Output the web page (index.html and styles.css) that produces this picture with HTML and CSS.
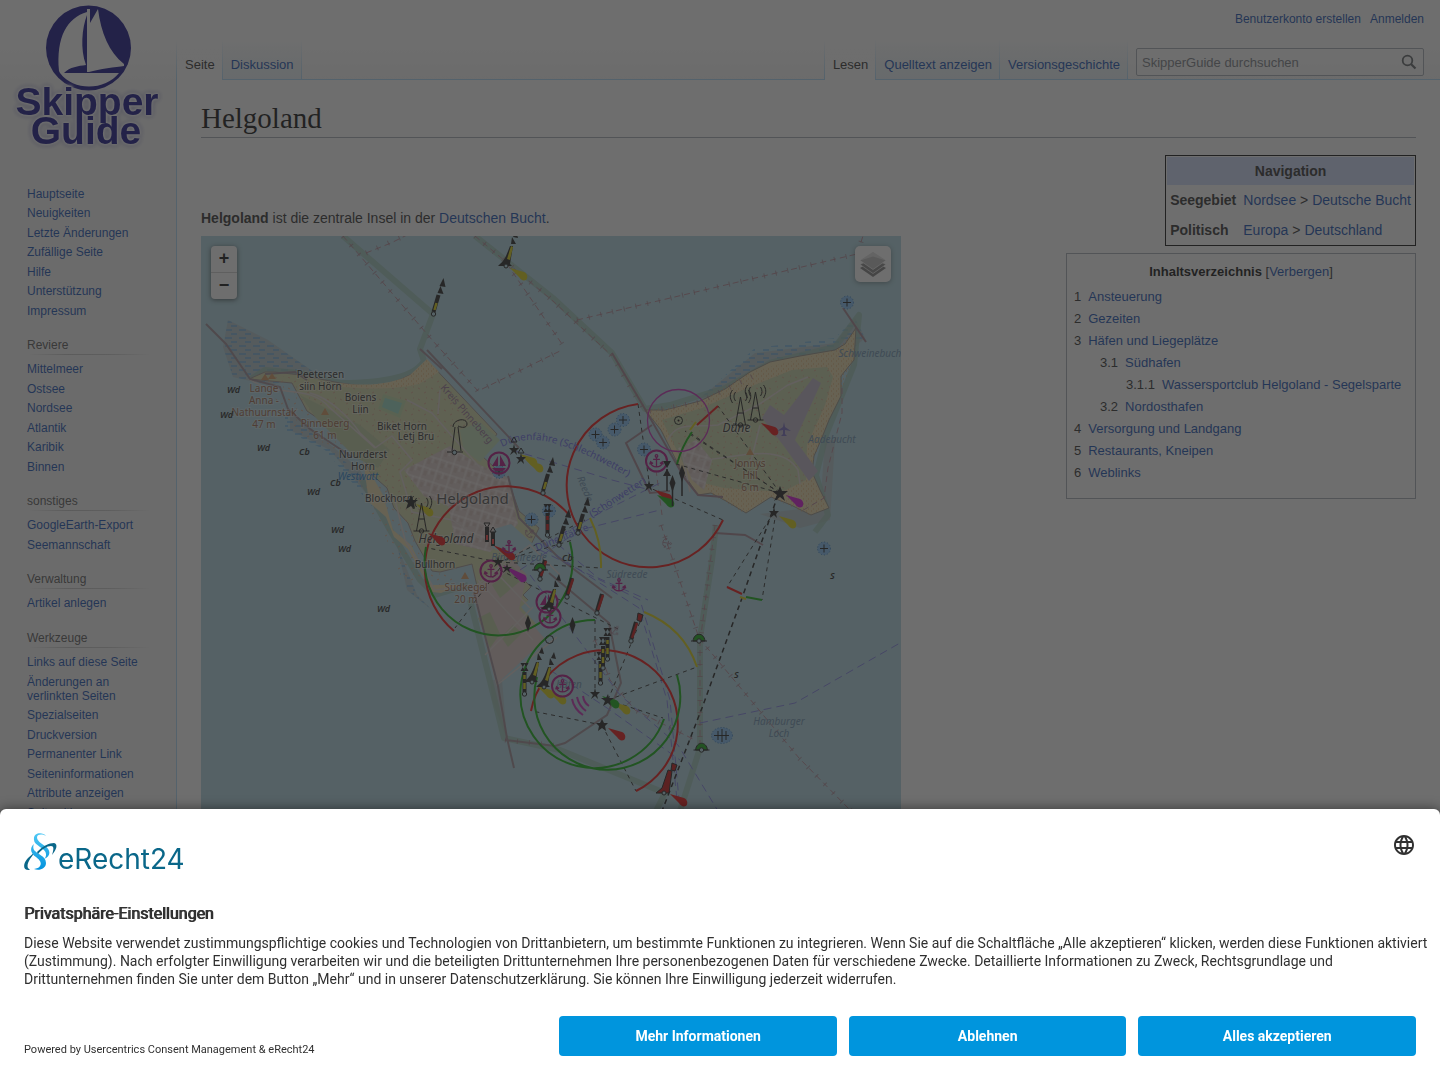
FILE: index.html
```html
<!DOCTYPE html>
<html lang="de">
<head>
<meta charset="utf-8">
<title>Helgoland – SkipperGuide</title>
<meta name="viewport" content="width=device-width, initial-scale=1">
<link rel="stylesheet" href="styles.css">
</head>
<body>
<div class="page">
  <aside class="sidebar">
    <a class="logo" href="#" aria-label="Hauptseite">
      <svg width="160" height="160" viewBox="0 0 160 160" aria-hidden="true">
        <circle cx="80.500" cy="48" r="42.500" fill="#050080"/>
        <g fill="#fff">
          <path d="M79 12C59 18 48 37 51 71l1 2 4 0C62 67 70 66 78 65 72 49 74 28 79 15z"/>
          <path d="M79 9h3v14l8-14c3 24 11 43 26 55l0 2c-8 1-25 3-35 6H79z"/>
          <path d="M52 73h59C98 90 66 92 52 73z"/>
        </g>
        <g class="logo-text" text-anchor="middle">
          <text x="79" y="115">Skipper</text>
          <text x="78" y="144">Guide</text>
        </g>
      </svg>
    </a>
    <nav class="portal" aria-label="Navigation">
      <ul>
        <li><a href="#">Hauptseite</a></li><li><a href="#">Neuigkeiten</a></li><li><a href="#">Letzte Änderungen</a></li><li><a href="#">Zufällige Seite</a></li><li><a href="#">Hilfe</a></li><li><a href="#">Unterstützung</a></li><li><a href="#">Impressum</a></li>
      </ul>
    </nav>
    <nav class="portal titled"><h3>Reviere</h3>
      <ul>
        <li><a href="#">Mittelmeer</a></li><li><a href="#">Ostsee</a></li><li><a href="#">Nordsee</a></li><li><a href="#">Atlantik</a></li><li><a href="#">Karibik</a></li><li><a href="#">Binnen</a></li>
      </ul>
    </nav>
    <nav class="portal titled"><h3>sonstiges</h3>
      <ul><li><a href="#">GoogleEarth-Export</a></li><li><a href="#">Seemannschaft</a></li></ul>
    </nav>
    <nav class="portal titled"><h3>Verwaltung</h3>
      <ul><li><a href="#">Artikel anlegen</a></li></ul>
    </nav>
    <nav class="portal titled"><h3>Werkzeuge</h3>
      <ul>
        <li><a href="#">Links auf diese Seite</a></li><li><a href="#">Änderungen an verlinkten Seiten</a></li><li><a href="#">Spezialseiten</a></li><li><a href="#">Druckversion</a></li><li><a href="#">Permanenter Link</a></li><li><a href="#">Seiten­informationen</a></li><li><a href="#">Attribute anzeigen</a></li><li><a href="#">Seite zitieren</a></li>
      </ul>
    </nav>
  </aside>

  <div class="column">
    <header class="head">
      <div class="personal"><a href="#">Benutzerkonto erstellen</a><a href="#">Anmelden</a></div>
      <div class="bar">
        <nav class="tabs tabs-left"><a class="tab on" href="#">Seite</a><a class="tab" href="#">Diskussion</a></nav>
        <nav class="tabs"><a class="tab on" href="#">Lesen</a><a class="tab" href="#">Quelltext anzeigen</a><a class="tab" href="#">Versionsgeschichte</a></nav>
        <form class="search">
          <input type="search" placeholder="SkipperGuide durchsuchen" aria-label="SkipperGuide durchsuchen">
          <button type="button" aria-label="Suchen"><svg width="16" height="16" viewBox="0 0 16 16"><circle cx="6.500" cy="6.500" r="4.800" fill="none" stroke="#54595d" stroke-width="1.800"/><path d="M10 10l4.500 4.500" stroke="#54595d" stroke-width="2.200"/></svg></button>
        </form>
      </div>
    </header>

    <main class="content">
      <h1>Helgoland</h1>
      <div class="body">
        <div class="article">
          <p><b>Helgoland</b> ist die zentrale Insel in der <a href="#">Deutschen Bucht</a>.</p>
          <div class="map">
            <svg class="chart" width="700" height="600" viewBox="201 236 700 600" role="img" aria-label="Seekarte von Helgoland">
              <defs>
                <pattern id="mud" width="14" height="8" patternUnits="userSpaceOnUse"><path d="M1 2h7M7 6h6" stroke="#4a9fe8"/></pattern>
                <pattern id="sand" width="5" height="5" patternUnits="userSpaceOnUse"><path d="M1 1h1M3 4h1" stroke="#d8a060"/></pattern>
                <pattern id="scrub" width="13" height="11" patternUnits="userSpaceOnUse"><path d="M2 3l2 1M8 8l2-1M10 2h1" stroke="#d2a588"/></pattern>
                <pattern id="town" width="14" height="12" patternUnits="userSpaceOnUse" patternTransform="rotate(18)"><path d="M0 1h14M1 0v12M8 1v6" stroke="#efe8e6"/><path d="M3 4h3v5H3zM10 3h3v3h-3z" fill="#cdb9b3"/></pattern>
                <g id="anchor" fill="none" stroke="currentColor" stroke-width="1.500"><circle cy="-6" r="1.500"/><path d="M0-5V7M-4-2h8M-7 2C-6 6-3 7 0 7s6-1 7-5M-8 4l1-3 3 2M8 4L7 1 4 3"/></g>
                <g id="port"><circle r="10.500" fill="none" stroke="#a80078" stroke-width="2"/><use href="#anchor" color="#a80078" transform="scale(.85)"/></g>
                <g id="marina"><circle r="10.500" fill="none" stroke="#a80078" stroke-width="2"/><path d="M-1-7v10h-6zM1-8l6 11H1zM-7 5H7L4 8h-8z" fill="#a80078"/></g>
                <path id="flare" d="M0 0l14 4c4 2 4 6 2 8-3 1-5 0-7-3z" fill="currentColor"/>
                <g id="wreck"><circle r="6.500" fill="#79b8f0" stroke="#2b75c2" stroke-dasharray="1 2"/><path d="M-4 0h8M0-4v8" stroke="#111"/></g>
                <g id="spar"><path d="M0-2l5-17" stroke="#111" stroke-width="4"/><path d="M1-4l2-7" stroke="currentColor" stroke-width="2.500"/><path d="M4-21l3-7 3 8zM6-28l4-8 2 9z" fill="#111"/><circle r="2.200" fill="#aad3df" stroke="#111"/></g>
                <g id="post"><path d="M0-2v-20" stroke="#111" stroke-width="4"/><path d="M0-5v-6M0-15v-4" stroke="currentColor" stroke-width="2.500"/><path d="M-4-31h8l-4 7zM-4-23h8l-4-7z" fill="#111"/><circle r="2.200" fill="#aad3df" stroke="#111"/></g>
                <g id="redspar"><path d="M0-2l5-17" stroke="#111" stroke-width="4"/><path d="M1-3l5-15" stroke="#c00000" stroke-width="2.500"/><circle r="2.200" fill="#aad3df" stroke="#111"/></g>
                <g id="bigbuoy"><path d="M-8 0h14L4-2 7-20h-3C1-12-1-6-6-2z" fill="#111"/><path d="M1-7l4-13 2 1-3 13z" fill="currentColor"/><path d="M5-22l1-7 4 7zM7-29l3-6 2 7z" fill="#111"/><circle r="2" fill="#aad3df" stroke="#111"/></g>
                <g id="green"><path d="M-6 0c1-9 11-9 12 0z" fill="#00a000" stroke="#111"/><path d="M-8 0H8" stroke="#111"/><circle r="2.200" fill="#aad3df" stroke="#111"/></g>
                <g id="mast" fill="none" stroke="#111"><path d="M0-28l-5 28M0-28L5 0M-8 0H8M-3-12h6"/><circle r="2.200"/><path d="M-5-24c-2-3-2-6 0-9M-8-22c-3-5-3-9 0-13M5-24c2-3 2-6 0-9M8-22c3-5 3-9 0-13"/></g>
                <path id="diamond" d="M0-9l3 8-3 9-3-9z" fill="#111"/>
              </defs>

              <rect x="201" y="236" width="700" height="600" fill="#aad3df"/>

              <!-- tidal flats -->
              <path fill="#aabfc5" d="M228 320l40 20 50 35-50 10-35-8-10-30zM290 410l70 60 20 40-50-60-40-20zM397 545l20 50 15 15-25-20zM490 680l12 0 5 60-15-40zM700 398l55-45 80-10 20-25 10 20-25 22-90 20-45 20zM825 440l10 0-5 80-30 8-40-14 40-5 20 0z"/>
              <path fill="url(#mud)" d="M228 320l40 20 50 35-50 10-35-8-10-30zM285 410l70 60 20 40-50-60-40-20zM397 545l20 50 15 15-25-20zM700 398l55-50 80-10 20-20 10 20-25 22-90 20-45 20z"/>

              <!-- safety contours -->
              <g class="contour">
                <path d="M343 236l90 78-13 35 4 12c-10 18-50 22-84 22l-40-10-35-3-14 9"/>
                <path d="M475 236l78 62 59 55 33 56 25-4 55-17 45-25 65-16 24-32-5 50-28 70-10 40 12 40-13 17"/>
                <path d="M716 525l-4 35-12 78v110l-20 63M470 600l34 138 56 12 105 43-9 18M362 480l28 50 30 50 15 15 33-10"/>
              </g>

              <!-- Hauptinsel -->
              <path fill="#cdd2a2" stroke="#9a8d88" d="M249 379l16-7 10 0 25 3 40 8 30 4 25-5 15-7 11-6 6-9 70 74-15 22 26 24 11 31 20 17-13 27-15 12 20 20-8 8 22 22-28 27-20 15-16-55-9-40-32 8-8-1-17-30-7-18-14-15-7-20-17-15-9-25-24-17-30-20-15-28z"/>
              <path fill="url(#scrub)" d="M265 375l35 3 80 12 48-25 50 55-40 40-20 100 40 20-20 12-40-15-8-30-27-50-10-35-55-30-20-28z"/>
              <path class="sand" d="M340 383c30 4 55 0 70-8l17-16 12 13-20 12c-25 6-50 5-79 3z"/>
              <path class="sand" d="M363 460l20 35 10 35 18 15 20 40 30 0-20 8-9-1-24-43-14-12-8-20-17-15z"/>
              <path fill="url(#sand)" d="M340 383c30 4 55 0 70-8l17-16 12 13-20 12c-25 6-50 5-79 3z"/>
              <path fill="#d6c6c2" d="M404 470l46-24 28 18 30 14 10 46-28 28-34-8-8-38-24-10z"/>
              <path fill="url(#town)" d="M404 470l46-24 28 18 30 14 10 46-28 28-34-8-8-38-24-10z"/>
              <path fill="#d6c2be" d="M473 590l40-30 14 15-8 34 26 30-47 44z"/>
              <path fill="#aad3df" d="M494 529l17-5 34 31-8 16-30-17-15-6zM521 607l16-15 18 14 0 18-10 10z"/>
              <g fill="#b9c99c"><path d="M492 585l20-19 12 12-24 20zM478 618l12-6 10 22-10 14zM501 637l12-12 9 8-14 14zM300 395l60 30 30 25-12 18-22-10-40-40z"/></g>
              <path fill="#b7d7b0" d="M460 430l20-8 20 18-20 22-16-12z"/>
              <path fill="#8fd8c0" stroke="#b9d8a0" stroke-width="3" d="M384 396l20 6-5 14-19-8z"/>
              <g fill="none" stroke="#d9cfcb" stroke-width="1.500"><path d="M249 379c30 20 60 5 80 28l46 41M310 393c20 5 40 25 50 40l15 14M375 448l17-12 20 24-12 12 12 40 40 8 30 20M407 400l25 13 12 14 40 45M440 390l-2 24M395 500l10 40 30 50 38-5M470 590l60-45 30 30M473 590l24 95 60-48M478 580l55 60M485 655l48-48M510 555l-38 40M490 566l40 42"/></g>
              <g fill="none" stroke="#97848e" stroke-width="2"><path d="M206 324l20 20 24 35 30 8 8 22 22 20 42 28M265 374l30-2 12 8M427 350l92 98M508 476l11 42 40 40 53 40M474 592l10 40 14 54 9 52 7 30M505 740l50 6 10-3 42-28 14-32-12-60-60-50M420 349l22 20"/></g>

              <!-- Düne -->
              <path class="sand" stroke="#8f8a80" d="M645 410l20 0 35-9 25-12 25-17 20-10 30-6 35-6 10-6 11-16-2 32-13 16 0 20-12 24-8 20-7 16-2 16 8 18 9 18-18 7-20-10-20-8-25 16-20-12-15-8-13 2-17-25-20-40z"/>
              <path fill="url(#sand)" d="M645 410l55-9 50-29 85-22 21-22-2 32-26 60-18 52 17 36-18 7-40-18-25 16-35-20z"/>
              <path fill="#c3d0a0" d="M662 420l40-12 50-22 40-16 35-3 6 10-8 28-18 40-1 35-24 12-58-4-20-5-20-18z"/>
              <path fill="url(#scrub)" d="M662 420l40-12 50-22 40-16 35-3 6 10-8 28-18 40-1 35-24 12-58-4-20-5-20-18z"/>
              <path fill="#d6c6c2" d="M680 450l16-10 16 20-8 30-12-10z"/><path fill="url(#town)" d="M678 448l18-8 16 20-8 30-12-10z"/>
              <path fill="#b9b0c2" d="M813 378l8 5-26 57 23 31-9 10-26-36-21-27 8-13 14 10z"/>
              <path fill="none" stroke="#d9cfcb" stroke-width="1.500" d="M668 440c8-20 30-12 50-15l40-20 30-20 20-8M700 460c30 0 80-20 98 10l2 14M750 465l10-40M690 492l-8-40"/>
              <g fill="none" stroke="#9a7a88" stroke-width="2"><path d="M843 308l23 34M612 353l33 56 40 70 13 16 25 2M652 425l-26 18 24 50 20-2M715 533l30 2 18 10"/></g>

              <!-- restricted area limits -->
              <g class="limit"><path d="M343 236l90 105 45 50 41-20 41-20M366 253l25-10 20-10M475 236l78 65 59 55M507 264l55 80M577 320l280-66 6-18M661 525l38 113 100 120 52 53M700 640v110M715 525l-14 110M656 470l6 45M595 640l15 40 25 30 60 30M842 388v25l-14 55-4 30-24 14"/></g>
              <g class="limit-tick"><path d="M343 236l90 105 45 50 41-20 41-20M366 253l45-20M475 236l78 65 59 55 33 56 55-10 55-27M507 264l55 80M577 320l280-66 6-18M661 525l38 113 100 120 52 53M700 640v110M715 525l-14 110M595 640l15 40 25 30 60 30M505 740l55 6"/></g>

              <!-- ferries -->
              <g class="ferry"><path d="M512 450l100 30 38 10M560 535l40-22 60-30M540 550l100 50 30 100 10 111M545 548l94 60 28 92 10 100M530 575l90 120 58 50 40 66M550 670l60 40 70 50M700 723l95-20 105-60M520 570l60-40 80-20M548 536l50 42 50 22"/></g>
              <path id="ferryPath" d="M502 447c38-20 84 5 150 44" fill="none"/>

              <!-- light sectors -->
              <g class="sector"><path d="M498 562l103 6M498 562l-70-14M498 562l75-22M500 568l-45 60M638 404l12 84 73 32M780 493l-62-87M780 493l-90-60M780 493l-95-62M780 493l-104-29M774 512l-47 75M776 512l-14 88M602 725l34 66M602 725l-70-14M608 700l89-33M608 700l55 18M595 620v75M608 700l36-88M500 570l120 60M505 560l80-40"/></g>
              <path d="M778 495l-36 103-40 110-40 103" fill="none" stroke="#111" stroke-width="1.500" stroke-dasharray="5 4"/>
              <g class="arcs">
                <path stroke="#e80000" d="M454 631A82 82 0 1 1 570 516M638 404A82 82 0 1 0 723 520M531 711A74 74 0 1 1 636 791M697 425l21-19M727 587l15 7"/>
                <path stroke="#00a800" d="M426 547A74 74 0 1 0 570 542M677 675A73 73 0 1 1 537 677M595 620A74 74 0 1 0 664 719M692 432q-10 14-15 32M746 597l16 3"/>
                <path stroke="#d8cc00" d="M590 518q12 24 11 50M644 612q40 16 53 55M690 430l6-8M740 597l6 2"/>
                <circle cx="678.500" cy="420.500" r="31" stroke="#c020b0" stroke-width="1.300"/>
                <path stroke="#c020b0" d="M572 699q2 10 11 16M577 697q2 9 9 14M583 696q1 7 6 10"/>
              </g>

              <!-- labels -->
              <g class="place" text-anchor="middle">
                <text x="320.500" y="378">Peetersen</text><text x="320.500" y="390">siin Hörn</text>
                <text x="360.500" y="401">Boiens</text><text x="360.500" y="413">Liin</text>
                <text x="402" y="430">Biket Horn</text><text x="416" y="440">Letj Bru</text>
                <text x="363" y="458">Nuurderst</text><text x="363" y="470">Horn</text>
                <text x="389" y="502">Blockhorn</text><text x="435" y="568">Bullhorn</text>
                <text class="town" x="472.500" y="504">Helgoland</text>
                <text class="isle" x="446" y="543">Helgoland</text><text class="isle" x="736.500" y="432">Düne</text>
              </g>
              <g class="peak" text-anchor="middle">
                <text x="264" y="392">Lange</text><text x="264" y="404">Anna -</text><text x="264" y="416">Nathuurnstak</text><text x="264" y="428">47 m</text>
                <text x="325" y="427">Pinneberg</text><text x="325" y="439">61 m</text>
                <text x="466" y="591">Südkegel</text><text x="466" y="603">20 m</text>
                <text x="750" y="467">Jonnys</text><text x="750" y="479">Hill</text><text x="750" y="491">6 m</text>
                <path d="M261 380l4-6 4 6zM268 379l4-6 4 6zM321 415l4-7 4 7zM461 579l4-7 4 7zM746 455l4-7 4 7z" fill="#d08f55" stroke="none"/>
              </g>
              <g class="water" text-anchor="middle">
                <text x="358" y="480" fill="#1877c9">Westwatt</text><text x="870" y="357">Schweinebuch</text><text x="832" y="443">Aadebucht</text><text x="627" y="578">Südreede</text><text x="519" y="561">Binnenreede</text><text x="779" y="725">Hamburger</text><text x="779" y="737">Loch</text><text x="569" y="688">hafen</text><text transform="translate(582 490) rotate(68)">Reede</text>
              </g>
              <g class="ferry-label"><text><textPath href="#ferryPath">Dünenfähre (Schlechtwetter)</textPath></text><text transform="translate(592 518) rotate(-33)">(Schönwetter)</text><text transform="translate(537 551) rotate(-22)">Dünenfähre</text></g>
              <text class="border-label" transform="translate(440 388) rotate(49)">Kreis Pinneberg</text>
              <g class="seabed"><text x="227" y="393">Wd</text><text x="220" y="418">Wd</text><text x="257" y="451">Wd</text><text x="299" y="455">Cb</text><text x="330" y="486">Cb</text><text x="307" y="495">Wd</text><text x="331" y="533">Wd</text><text x="338" y="552">Wd</text><text x="377" y="612">Wd</text><text x="562" y="561">Cb</text><text x="734" y="678">S</text><text x="830" y="579">S</text></g>

              <!-- seamarks -->
              <use href="#wreck" x="847" y="302.500"/><use href="#wreck" x="623" y="420"/><use href="#wreck" x="614.500" y="429.500"/><use href="#wreck" x="595.500" y="434.500"/><use href="#wreck" x="603" y="442.500"/><use href="#wreck" x="644" y="449.500"/><use href="#wreck" x="824" y="548.500"/><use href="#wreck" x="531.500" y="519.500"/><use href="#wreck" x="549" y="511"/><use href="#wreck" x="499" y="472"/>
              <ellipse cx="722" cy="735.500" rx="10.500" ry="8" fill="#79b8f0" stroke="#2b75c2" stroke-dasharray="1 2"/><path d="M714 735.500h15M718 731v9M722 729v13M726 731v9" stroke="#111"/>
              <circle cx="678.500" cy="420.500" r="4" fill="none" stroke="#111"/><circle cx="678.500" cy="420.500" r="1"/><circle cx="549.500" cy="639.500" r="4" fill="none" stroke="#111"/>
              <g color="#e80000"><use href="#flare" x="761" y="423"/><use href="#flare" x="655" y="490"/><use href="#flare" x="428" y="533"/><use href="#flare" x="608" y="728"/><use href="#flare" x="670" y="794"/><path d="M493 545l20 8c4 4 2 8-3 7z" fill="currentColor"/></g>
              <g color="#d8cc00"><use href="#flare" x="510" y="268"/><use href="#flare" x="520" y="454"/><use href="#flare" x="526" y="460"/><use href="#flare" x="416" y="504"/><use href="#flare" x="779" y="516"/><use href="#flare" x="613" y="702"/><use href="#flare" x="537" y="686"/><use href="#flare" x="549" y="692"/></g>
              <use href="#flare" x="602" y="696" color="#00a800"/><use href="#flare" x="657" y="495" color="#00a800"/><use href="#flare" x="786" y="495" color="#d000d0"/><path d="M503 565l22 10c4 5 0 8-4 7z" fill="#d000d0"/>
              <use href="#port" x="656.500" y="461"/><use href="#port" x="491" y="571"/><use href="#port" x="550" y="617"/><use href="#port" x="562.500" y="686"/><use href="#marina" x="499" y="463"/><use href="#marina" x="547" y="602"/>
              <g color="#a80078"><use href="#anchor" transform="translate(619 585) scale(.85)"/><use href="#anchor" transform="translate(509 547) scale(.85)"/></g>
              <g color="#9a6a80" opacity=".8"><use href="#anchor" transform="translate(667 543) rotate(100) scale(.6)"/><use href="#anchor" transform="translate(530 533) rotate(50) scale(.6)"/><use href="#anchor" transform="translate(615 630) rotate(40) scale(.6)"/></g>
              <use href="#mast" x="421.500" y="531"/><use href="#mast" x="740.500" y="425"/><use href="#mast" x="755.500" y="420"/>
              <path d="M452 451l3-24M461 451l-3-24M447 452h16M453 427c0-8 14-10 14-3 0 4-5 4-9 2" fill="none" stroke="#111"/><circle cx="454.500" cy="452.500" r="2.200" fill="#aad3df" stroke="#111"/>
              <path fill="#111" d="M411 495l2 5 5 0-4 3 1 6-4-3-5 3 2-6-4-3 5 0zM780 486l2 5 6 0-5 4 2 6-5-4-6 4 3-6-5-4 6 0zM514 444l1 4 4 0-3 3 1 4-3-3-4 3 2-4-3-3 4 0zM521 453l1 4 4 0-3 3 1 4-3-3-4 3 2-4-3-3 4 0zM649 480l1 4 4 0-3 3 1 4-3-3-4 3 2-4-3-3 4 0zM774 507l1 4 4 0-3 3 1 4-3-3-4 3 2-4-3-3 4 0zM498 556l1 4 5 0-4 3 1 4-3-3-4 3 2-4-4-3 5 0zM507 563l1 4 4 0-3 2 1 4-3-3-4 3 2-4-3-2 4 0zM595 688l1 4 4 0-3 3 1 4-3-3-4 3 2-4-3-3 4 0zM608 694l1 4 5 0-4 3 1 5-3-3-5 3 2-5-4-3 5 0zM602 719l2 4 4 0-3 3 1 5-4-3-4 3 1-5-3-3 4 0z"/>
              <g fill="none" stroke="#111"><path d="M511 442l3-5 3 5zM518 453l3-5 3 5zM484 523h6l-3 5zM490 532l3-5 3 5z"/></g>
              <g color="#d8cc00"><use href="#spar" x="433.500" y="314"/><use href="#spar" x="543" y="493"/><use href="#spar" x="559" y="545"/><use href="#spar" x="578" y="533"/><use href="#bigbuoy" x="506" y="266"/><use href="#bigbuoy" x="549" y="609"/><use href="#bigbuoy" x="532" y="682"/><use href="#bigbuoy" x="544" y="687"/><use href="#post" x="524.500" y="694"/><use href="#post" x="600.500" y="683"/><use href="#post" x="603" y="668"/><use href="#post" x="607.500" y="659"/></g>
              <path d="M667 491v-22M672.500 506v-22M682 496v-20" stroke="#111" stroke-width="1.500"/><path d="M663 461h8l-4 7zM663 476l4-7 4 7z" fill="#111"/>
              <g color="#c00"><use href="#post" x="547.500" y="535"/></g>
              <path d="M656 793l6-5 6-18 4 1-3 22z" fill="#c00000" stroke="#111"/><circle cx="664" cy="793" r="2" fill="#aad3df" stroke="#111"/>
              <path d="M487 542v-15M493 546v-14" stroke="#111" stroke-width="4"/><path d="M487 540v-5M493 544v-5" stroke="#f33" stroke-width="2"/>
              <use href="#redspar" x="540" y="579"/><use href="#redspar" x="567" y="597"/><use href="#redspar" x="597" y="613"/><use href="#redspar" x="631" y="641"/><path d="M638 613l5 2-2 7-4-2zM672 763l5 2-2 6-4-1z" fill="#c00000" stroke="#111"/>
              <use href="#green" x="699" y="641"/><use href="#green" x="701.500" y="750"/><use href="#green" x="540" y="570"/>
              <use href="#diamond" x="682" y="474"/><use href="#diamond" x="672.500" y="484"/><use href="#diamond" x="528" y="624"/><use href="#diamond" x="572.500" y="626"/>
              <path d="M784 422l1 5 6 4-6-1 0 4 2 2-3 0-3 0 2-2 0-4-6 1 6-4z" fill="#6b5fb8"/>
            </svg>
            <div class="zoom"><button type="button" aria-label="Vergrößern">+</button><button type="button" aria-label="Verkleinern">−</button></div>
            <button class="layers" type="button" aria-label="Ebenen"><svg width="26" height="26" viewBox="0 0 26 26"><path d="M0 17l13-7 13 7-13 9z" fill="#777"/><path d="M0 13.500L13 7l13 6.500-13 9z" fill="#808080" stroke="#fff" stroke-width=".7"/><path d="M0 9.500L13 1l13 8.500-13 9z" fill="#b9b9b9" stroke="#fff" stroke-width=".7"/><path d="M0 9.500L13 1l13 8.500-13-4z" fill="#ddd"/></svg></button>
          </div>
        </div>
        <div class="side">
          <table class="infobox">
            <thead><tr><th colspan="2">Navigation</th></tr></thead>
            <tbody>
            <tr><th scope="row">Seegebiet</th><td><a href="#">Nordsee</a> &gt; <a href="#">Deutsche Bucht</a></td></tr>
            <tr><th scope="row">Politisch</th><td><a href="#">Europa</a> &gt; <a href="#">Deutschland</a></td></tr>
            </tbody>
          </table>
          <nav class="toc">
            <div class="toc-title"><h2>Inhaltsverzeichnis</h2> [<a href="#">Verbergen</a>]</div>
            <ul>
              <li><span>1</span><a href="#">Ansteuerung</a></li>
              <li><span>2</span><a href="#">Gezeiten</a></li>
              <li><span>3</span><a href="#">Häfen und Liegeplätze</a>
                <ul><li><span>3.1</span><a href="#">Südhafen</a><ul><li><span>3.1.1</span><a href="#">Wassersportclub Helgoland - Segelsparte</a></li></ul></li><li><span>3.2</span><a href="#">Nordosthafen</a></li></ul></li>
              <li><span>4</span><a href="#">Versorgung und Landgang</a></li>
              <li><span>5</span><a href="#">Restaurants, Kneipen</a></li>
              <li><span>6</span><a href="#">Weblinks</a></li>
            </ul>
          </nav>
        </div>
      </div>
    </main>
  </div>
</div>

<div class="overlay"></div>
<section class="consent" role="dialog" aria-labelledby="consent-title">
  <div class="consent-head">
    <svg class="erecht" width="164" height="40" viewBox="0 0 164 40" role="img" aria-label="eRecht24">
      <defs><linearGradient id="para" x1="0" y1="0" x2="0" y2="38" gradientUnits="userSpaceOnUse"><stop offset="0" stop-color="#4fc8f4"/><stop offset="1" stop-color="#0090dc"/></linearGradient></defs>
      <path d="M6 37C-2 38-1 30 4 25L12 18C7 24 2 31 4 35z" fill="#0a6789"/>
      <path d="M22 3C19-1 9-1 10 7c0 6 13 8 12 15 0 2-1 3-2 4 8-3 6-10 1-13-4-3-8-5-8-9 1-3 5-3 9-1z" fill="url(#para)"/>
      <path d="M10 11C5 15 7 21 12 24c4 3 6 6 4 9-1 2-3 2-6 3 5 2 12 0 12-6 0-7-9-9-12-13-1-2-1-4 0-6z" fill="url(#para)"/>
      <path d="M13 19C19 13 25 10 30 10c4 1 3 6-2 12 2-6 2-9-1-9-4 0-9 3-13 8z" fill="#0a6789"/>
      <text x="34" y="36">eRecht24</text>
    </svg>
    <button class="globe" type="button" aria-label="Sprache wählen"><svg width="24" height="24" viewBox="0 0 24 24" fill="#303030"><path d="M11.990 2C6.470 2 2 6.480 2 12s4.470 10 9.990 10C17.520 22 22 17.520 22 12S17.520 2 11.990 2zm6.930 6h-2.950c-.32-1.250-.78-2.450-1.380-3.560 1.840.63 3.370 1.910 4.330 3.560zM12 4.040c.83 1.200 1.480 2.530 1.910 3.960h-3.820c.43-1.430 1.080-2.760 1.910-3.960zM4.260 14C4.100 13.360 4 12.690 4 12s.1-1.360.26-2h3.380c-.08.66-.14 1.320-.14 2s.06 1.340.14 2H4.260zm.82 2h2.950c.32 1.250.78 2.450 1.380 3.560-1.840-.63-3.370-1.900-4.330-3.560zm2.950-8H5.080c.96-1.660 2.490-2.930 4.330-3.560C8.810 5.550 8.350 6.750 8.030 8zM12 19.960c-.83-1.200-1.480-2.530-1.910-3.960h3.820c-.43 1.430-1.080 2.760-1.910 3.960zM14.340 14H9.660c-.09-.66-.16-1.320-.16-2s.07-1.350.16-2h4.680c.09.65.16 1.320.16 2s-.07 1.340-.16 2zm.25 5.560c.6-1.110 1.060-2.310 1.380-3.560h2.950c-.96 1.650-2.490 2.930-4.330 3.560zM16.360 14c.08-.66.14-1.320.14-2s-.06-1.340-.14-2h3.380c.16.64.26 1.310.26 2s-.1 1.360-.26 2h-3.380z"/></svg></button>
  </div>
  <h2 id="consent-title">Privatsphäre-Einstellungen</h2>
  <p>Diese Website verwendet zustimmungspflichtige cookies und Technologien von Drittanbietern, um bestimmte Funktionen zu integrieren. Wenn Sie auf die Schaltfläche „Alle akzeptieren“ klicken, werden diese Funktionen aktiviert (Zustimmung). Nach erfolgter Einwilligung verarbeiten wir und die beteiligten Drittunternehmen Ihre personenbezogenen Daten für verschiedene Zwecke. Detaillierte Informationen zu Zweck, Rechtsgrundlage und Drittunternehmen finden Sie unter dem Button „Mehr“ und in unserer Datenschutzerklärung. Sie können Ihre Einwilligung jederzeit widerrufen.</p>
  <div class="consent-foot">
    <small>Powered by Usercentrics Consent Management &amp; eRecht24</small>
    <div class="actions"><button type="button">Mehr Informationen</button><button type="button">Ablehnen</button><button type="button">Alles akzeptieren</button></div>
  </div>
</section>
</body>
</html>
```
FILE: styles.css
```css
* { box-sizing: border-box; }
html, body { height: 100%; }
body {
  margin: 0;
  overflow: hidden;
  background: #f6f6f6 linear-gradient(#fff 50%, #f6f6f6) 0 0 / 100% 80px no-repeat;
  font-family: "Liberation Sans", Arial, sans-serif;
  color: #222;
}
a { color: #0645ad; text-decoration: none; }
ul { list-style: none; margin: 0; padding: 0; }
button { font-family: inherit; cursor: pointer; }

.page { display: grid; grid-template-columns: 176px minmax(0, 1fr); min-height: 100%; }

/* sidebar */
.sidebar { padding: 0 8px; font-size: 12px; line-height: 14px; }
.logo { display: block; height: 160px; margin-bottom: 27px; }
.logo-text {
  font: bold 39px "Liberation Sans", Arial, sans-serif; fill: #050080;
  filter: drop-shadow(0 0 1px #fff) drop-shadow(0 0 1px #fff) drop-shadow(0 0 1px #fff) drop-shadow(0 0 2px #9090c0);
}
.portal { padding: 0 16px 0 19px; margin-bottom: 15px; }
.portal h3 {
  margin: 0 0 7px; padding-bottom: 3px; font-size: 12px; line-height: 14px; font-weight: 400; color: #4d4d4d;
  background: linear-gradient(90deg, transparent, #c0c0c0 33%, #c8c8c8 66%, transparent) 0 100% / 100% 1px no-repeat;
}
.portal li { padding-bottom: 5px; }
.portal li:nth-child(even) { padding-bottom: 6px; }
.titled li:nth-child(odd) { padding-bottom: 6px; }
.titled li:nth-child(even) { padding-bottom: 5px; }

/* header */
.head { height: 80px; display: flex; flex-direction: column; }
.personal { display: flex; justify-content: flex-end; gap: 9px; height: 40px; padding: 12px 16px 0 0; font-size: 12px; line-height: 14px; }
.bar { display: flex; height: 40px; padding-right: 16px; background: linear-gradient(#a7d7f9, #a7d7f9) 0 100% / 100% 1px no-repeat; }
.tabs { display: flex; background: linear-gradient(rgba(167,215,249,0), #a7d7f9) 0 0 / 1px 100% no-repeat; padding-left: 1px; }
.tabs-left { margin-right: auto; }
.tab {
  padding: 17px 7px 0 8px; font-size: 13px; line-height: 16px; border-right: 1px solid;
  border-image: linear-gradient(rgba(167,215,249,0), #a7d7f9) 1;
  background: linear-gradient(rgba(255,255,255,0), #e8f2f8) 0 0 / 100% 39px no-repeat;
}
.tab.on { color: #222; background: linear-gradient(rgba(255,255,255,0), #fff); }
.search { display: flex; align-items: center; width: 288px; height: 28px; margin: 8px 0 0 8px; border: 1px solid #a2a9b1; border-radius: 2px; background: rgba(255,255,255,.5); }
.search input { flex: 1; min-width: 0; border: 0; padding: 0 5px; background: none; font: 13px "Liberation Sans", Arial, sans-serif; outline: 0; }
.search input::placeholder { color: #72777d; opacity: 1; }
.search button { width: 28px; height: 26px; padding: 5px 6px; border: 0; background: none; }
.search svg { display: block; }

/* article */
.column { display: flex; flex-direction: column; }
.content { flex: 1; padding: 20px 24px 24px; background: #fff; border-left: 1px solid #a7d7f9; font-size: 14px; line-height: 22px; }
.content h1 { margin: 0 0 17px; padding-bottom: 1px; border-bottom: 1px solid #a2a9b1; font: 400 29px/36px "Liberation Serif", "Times New Roman", serif; color: #000; }
.body { display: flex; justify-content: space-between; align-items: flex-start; }
.article { flex: 1; min-width: 0; padding-top: 52px; }
.article p { margin: 0 0 7px; }
.map { position: relative; max-width: 700px; height: 600px; overflow: hidden; }
.chart { display: block; font-family: "Noto Sans", sans-serif; }
.zoom { position: absolute; left: 10px; top: 10px; width: 26px; border-radius: 4px; box-shadow: 0 1px 5px rgba(0,0,0,.65); background: #fff; }
.zoom button { display: block; width: 26px; height: 26px; padding: 0 0 2px; border: 0; background: none; color: #000; font: bold 18px/24px "Liberation Sans", Arial, sans-serif; }
.zoom button + button { height: 27px; border-top: 1px solid #ccc; }
.layers { position: absolute; right: 10px; top: 10px; width: 36px; height: 36px; padding: 5px; border: 0; border-radius: 5px; background: #fff; box-shadow: 0 1px 5px rgba(0,0,0,.4); }
.layers svg { display: block; }

.contour { fill: none; stroke: #8fbaa8; stroke-width: 6px; opacity: .7; stroke-linejoin: round; }
.sand { fill: #e6d6a6; }
.limit { fill: none; stroke: #b08090; stroke-width: 1px; stroke-dasharray: 6 4; }
.limit-tick { fill: none; stroke: #a07080; stroke-width: 5px; stroke-dasharray: 1 11; opacity: .7; }
.ferry { fill: none; stroke: #7a7ae0; stroke-width: 1px; stroke-dasharray: 8 5; }
.sector { fill: none; stroke: #222; stroke-width: 1px; stroke-dasharray: 4 4; }
.arcs { fill: none; stroke-width: 2px; }
.place { font-size: 10px; fill: #222; stroke: #fff; stroke-opacity: .4; stroke-width: 2px; paint-order: stroke; }
.place .town { font-size: 15px; fill: #444; }
.place .isle { font-size: 12px; font-style: italic; }
.peak { font-size: 10px; fill: #985c3c; stroke: #fff; stroke-opacity: .3; stroke-width: 2px; paint-order: stroke; }
.water { font-size: 10px; font-style: italic; fill: #6288aa; }
.ferry-label { font-size: 10px; fill: #6060e0; }
.border-label { font-size: 10px; fill: #8a688c; }
.seabed { font: italic 600 9px "Noto Sans", sans-serif; fill: #111; }

.side { display: flex; flex-direction: column; align-items: flex-end; gap: 7px; }
.infobox { padding: 1px 1px 0; border: 1px solid #000; border-spacing: 0; font-size: 14px; line-height: 22px; }
.infobox th, .infobox td { padding: 4px 3px 4px 4px; text-align: left; white-space: nowrap; }
.infobox tbody th { padding-left: 3px; }
.infobox thead th { padding: 3px; text-align: center; background: #ccd9fa; }
.toc { min-width: 350px; padding: 7px; border: 1px solid #a2a9b1; font-size: 13px; line-height: 18px; white-space: nowrap; }
.toc-title { text-align: center; padding: 2px 0 3px; }
.toc h2 { display: inline; margin: 0; font-size: 13px; color: #000; }
.toc li { padding-top: 4px; }
.toc li span { margin-right: 7px; }
.toc ul ul { padding-left: 26px; }
.toc > ul { padding-bottom: 9px; }

/* consent dialog */
.overlay { position: fixed; inset: 0; background: rgba(48,48,48,.7); }
.consent { position: fixed; left: 0; right: 0; bottom: 0; padding: 24px; border-radius: 6px 6px 0 0; background: #fff; color: #303030; font-family: Roboto, sans-serif; box-shadow: 0 0 12px rgba(0,0,0,.5); }
.consent-head { display: flex; justify-content: space-between; align-items: flex-start; height: 73px; }
.erecht text { font: 28px Inter, sans-serif; fill: #0a6789; }
.globe { width: 24px; height: 24px; padding: 0; border: 0; background: none; }
.globe svg { display: block; }
.consent h2 { margin: 0 0 12px; font-size: 16px; line-height: 16px; font-weight: 400; text-shadow: 1px 0 0 #303030; }
/* the text may run half-way into the dialog's right padding */
.consent p { margin: 0 -12px 28px 0; font-size: 14px; line-height: 18px; }
.consent-foot { display: grid; grid-template-columns: 5fr 8fr; align-items: end; }
.consent small { font-size: 11px; line-height: 12px; }
.actions { display: grid; grid-template-columns: repeat(3, 1fr); gap: 12px; }
.actions button { height: 40px; border: 0; border-radius: 4px; background: #0095dd; color: #fff; font-size: 14px; font-weight: 700; }
```
